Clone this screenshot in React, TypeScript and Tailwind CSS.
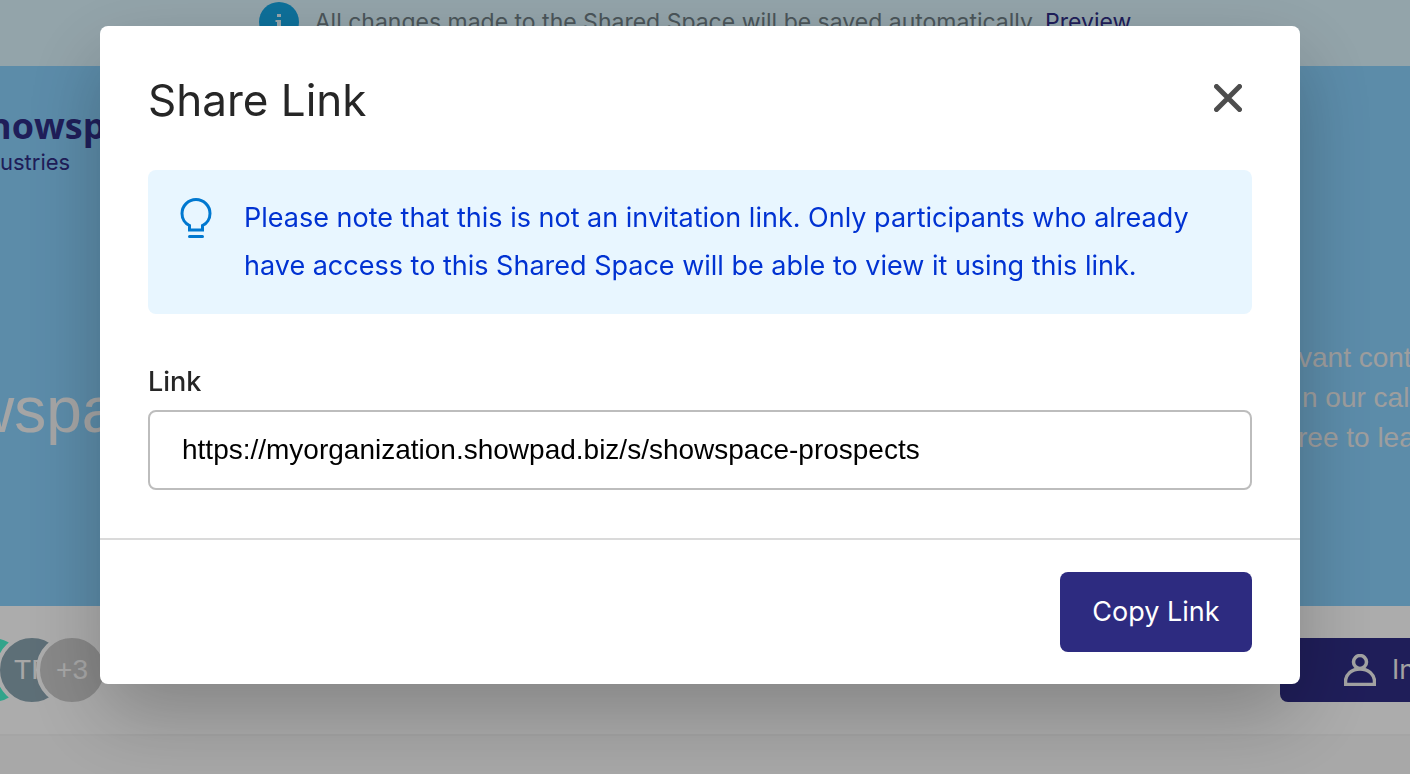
import { useState } from "react";

const BulbIcon = () => (
  <svg width="32" height="40" viewBox="0 0 32 40" fill="none" stroke="#0078d0" className="mt-1 shrink-0" aria-hidden="true">
    <path
      d="M9.500 32v-4.500C5 25.500 2 20.500 2 15.500a14 14 0 0 1 28 0c0 5-3 10-7.500 12v4.500z"
      strokeWidth="3"
    />
    <path d="M9.500 38.500h13" strokeWidth="3" strokeLinecap="round" />
  </svg>
);

const CloseIcon = () => (
  <svg width="28" height="28" viewBox="0 0 28 28" stroke="#4d4d4d" strokeWidth="5" strokeLinecap="round" aria-hidden="true">
    <path d="M2.500 2.500l23 23M25.500 2.500l-23 23" />
  </svg>
);

const UserIcon = () => (
  <svg width="32" height="32" viewBox="0 0 32 32" fill="none" stroke="#e8e8e8" strokeWidth="3.500" className="shrink-0" aria-hidden="true">
    <circle cx="16" cy="8" r="6.500" />
    <path d="M1.500 30.500v-2.500c0-8 6.500-13 14.500-13s14.500 5 14.500 13v2.500z" />
  </svg>
);

const InfoIcon = () => (
  <svg width="40" height="40" viewBox="0 0 40 40" className="shrink-0" aria-hidden="true">
    <circle cx="20" cy="20" r="20" fill="#14a0dc" />
    <path d="M18 12h4v3h-4zM16.500 18H22v11h2v2h-8v-2h2v-9h-1.500z" fill="#d9ecf4" />
  </svg>
);

const Banner = () => (
  <div className="flex h-[66px] items-start justify-center gap-4 bg-[#d3ebf4] pt-0.5 pr-5 whitespace-nowrap">
    <InfoIcon />
    <p className="text-[23px] leading-10 text-[#6b7a80]">
      All changes made to the Shared Space will be saved automatically.{" "}
      <a href="#preview" className="text-[#2d2b80] underline">
        Preview
      </a>
    </p>
  </div>
);

const Hero = () => (
  <div className="flex h-[540px] justify-between overflow-hidden bg-[#84c9f3]">
    <div className="-ml-3 w-[120px] shrink-0 pt-10">
      <div className="text-[#2d2b80]">
        <p className="font-['Open_Sans',sans-serif] text-4xl leading-10 font-bold">howsp</p>
        <p className="pl-3 text-[22px] leading-8">ustries</p>
      </div>
      <p className="-ml-5 pt-[196px] font-['Liberation_Sans',sans-serif] text-[64px] leading-[72px] text-[#ededed]">wspa</p>
    </div>
    <div className="w-[112px] shrink-0 pt-[272px] font-['Liberation_Sans',sans-serif] text-[28px] leading-10 whitespace-nowrap text-[#e2e2e2]">
      <p>vant cont</p>
      <p className="pl-1">n our call</p>
      <p>ree to leav</p>
    </div>
  </div>
);

const Members = () => (
  <div className="flex h-[130px] items-center justify-between border-b-2 border-[#ededed] bg-[#f7f7f7]">
    <div className="-ml-11 flex font-['Liberation_Sans',sans-serif] text-[28px] text-[#f0f0f0]">
      <span className="size-[72px] rounded-full border-4 border-[#f7f7f7] bg-[#48ebc8]" />
      <span className="-ml-8 flex size-[72px] items-center justify-center rounded-full border-4 border-[#f7f7f7] bg-[#869fab]">
        TP
      </span>
      <span className="-ml-8 flex size-[72px] items-center justify-center rounded-full border-4 border-[#f7f7f7] bg-[#c4c4c4]">
        +3
      </span>
    </div>
    <button
      type="button"
      className="flex h-16 w-[130px] shrink-0 items-center gap-4 rounded-l-lg bg-[#2d2b80] pl-16 text-[27px] whitespace-nowrap text-[#e8e8e8]"
    >
      <UserIcon />
      Invite
    </button>
  </div>
);

const ShareDialog = () => {
  const [link, setLink] = useState("https://myorganization.showpad.biz/s/showspace-prospects");

  return (
    <div
      role="dialog"
      aria-modal="true"
      aria-labelledby="share-title"
      className="w-full max-w-[1200px] rounded-lg bg-white shadow-[0_32px_80px_rgba(0,0,0,0.24)]"
    >
      <div className="px-12 pt-12 pb-12">
        <div className="flex items-center justify-between pr-2.5">
          <h1 id="share-title" className="text-[44px] leading-[52px] text-[#262626]">
            Share Link
          </h1>
          <button type="button" aria-label="Close" className="mb-1">
            <CloseIcon />
          </button>
        </div>
        <div className="mt-11 flex gap-8 rounded-lg bg-[#e8f6ff] px-8 py-6">
          <BulbIcon />
          <p className="text-[27px] leading-[48px] text-[#0032d2]">
            Please note that this is not an invitation link. Only participants who already have access to this Shared
            Space will be able to view it using this link.
          </p>
        </div>
        <label htmlFor="share-link" className="mt-[52px] block text-[27px] leading-8 font-medium text-[#262626]">
          Link
        </label>
        <input
          id="share-link"
          type="text"
          value={link}
          onChange={(e) => setLink(e.target.value)}
          className="mt-3 block h-20 w-full rounded-lg border-2 border-[#bdbdbd] px-8 font-['Liberation_Sans',sans-serif] text-[28px] text-black"
        />
      </div>
      <div className="flex justify-end border-t-2 border-[#dadada] px-12 py-8">
        <button
          type="button"
          onClick={() => navigator.clipboard?.writeText(link)}
          className="h-20 min-w-48 rounded-lg bg-[#2d2b80] px-8 text-[27px] whitespace-nowrap text-white"
        >
          Copy Link
        </button>
      </div>
    </div>
  );
};

export default function App() {
  return (
    <div className="h-screen overflow-hidden bg-[#f1f1f1] font-[Inter,sans-serif]">
      <Banner />
      <Hero />
      <Members />
      <div className="fixed inset-0 flex items-start justify-center bg-black/30 pt-[26px] pr-2.5">
        <ShareDialog />
      </div>
    </div>
  );
}
